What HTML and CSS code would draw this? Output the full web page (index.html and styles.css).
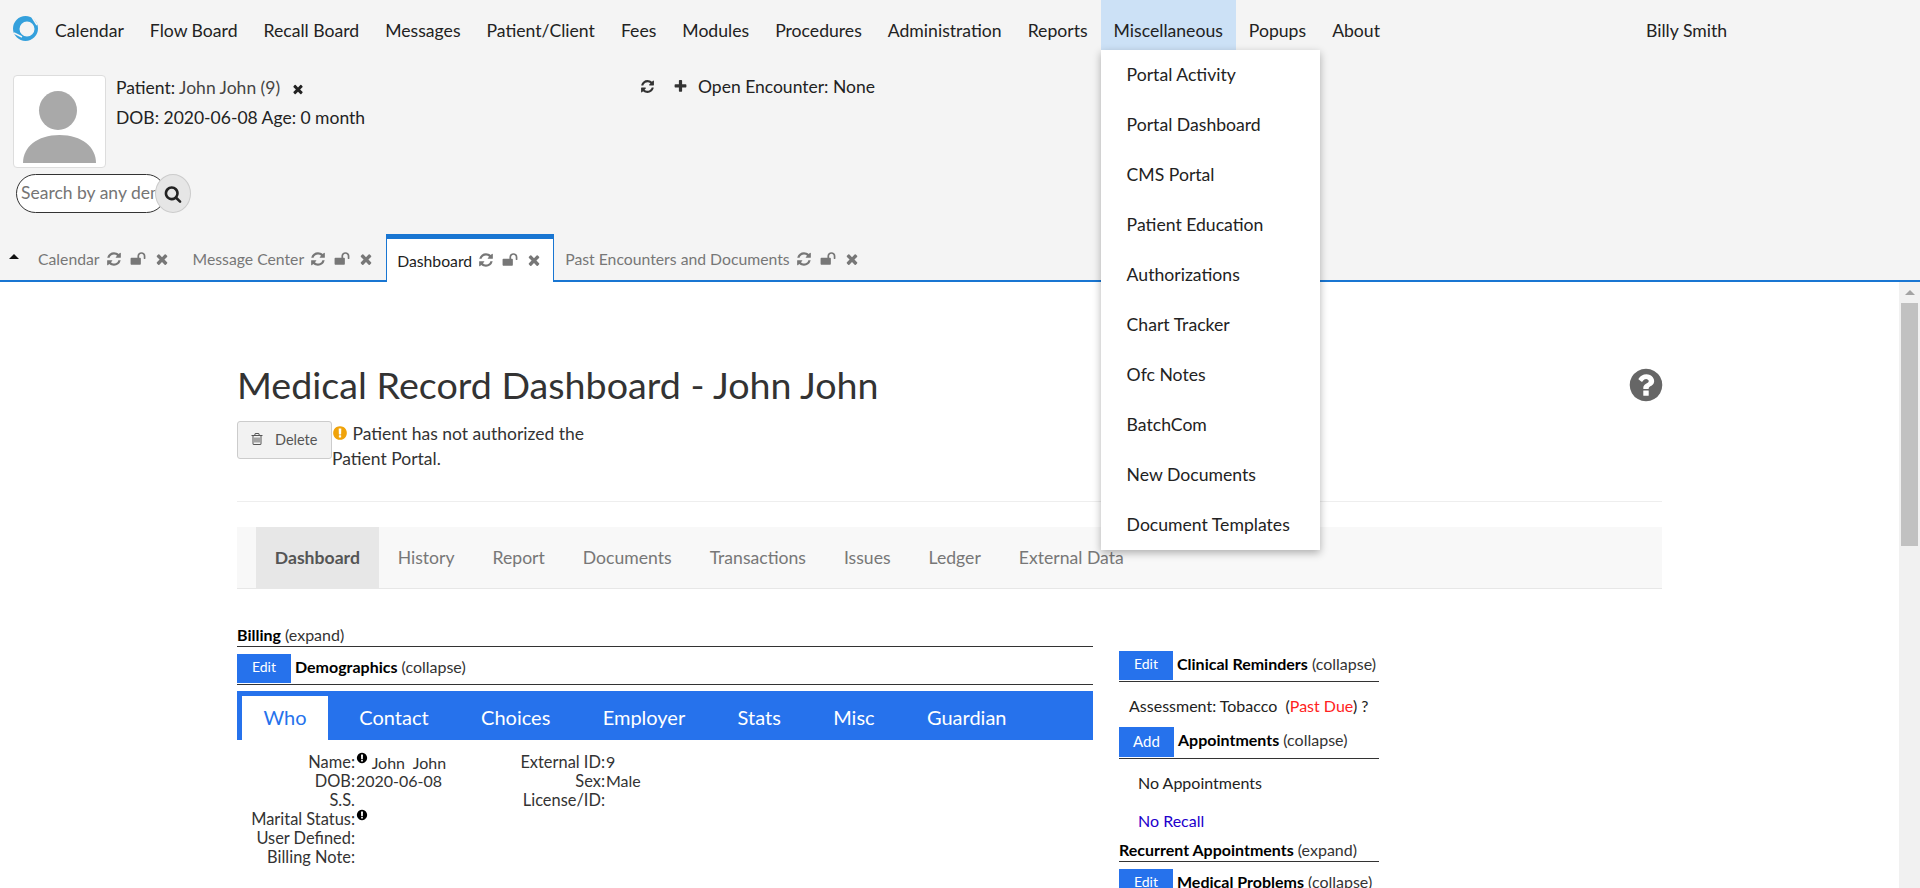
FILE: index.html
```html
<!DOCTYPE html>
<html lang="en">
<head>
  <meta charset="UTF-8">
  <title>OpenEMR</title>
  <link rel="stylesheet" href="styles.css">
</head>
<body>

  <svg class="icon-defs" xmlns="http://www.w3.org/2000/svg">
    <symbol id="i-times" viewBox="0 0 1792 1792"><path d="M1490 1322q0 40-28 68l-136 136q-28 28-68 28t-68-28l-294-294-294 294q-28 28-68 28t-68-28l-136-136q-28-28-28-68t28-68l294-294-294-294q-28-28-28-68t28-68l136-136q28-28 68-28t68 28l294 294 294-294q28-28 68-28t68 28l136 136q28 28 28 68t-28 68l-294 294 294 294q28 28 28 68z"/></symbol>
    <symbol id="i-refresh" viewBox="0 0 1792 1792"><path d="M1639 1056q0 5-1 7-64 268-268 434.5t-478 166.5q-146 0-282.5-55t-243.5-157l-129 129q-19 19-45 19t-45-19-19-45v-448q0-26 19-45t45-19h448q26 0 45 19t19 45-19 45l-137 137q71 66 161 102t187 36q134 0 250-65t186-179q11-17 53-117 8-23 30-23h192q13 0 22.5 9.5t9.5 22.5zm25-800v448q0 26-19 45t-45 19h-448q-26 0-45-19t-19-45 19-45l138-138q-148-137-349-137-134 0-250 65t-186 179q-11 17-53 117-8 23-30 23h-199q-13 0-22.5-9.5t-9.5-22.5v-7q65-268 270-434.5t480-166.5q146 0 284 55.5t245 156.5l130-129q19-19 45-19t45 19 19 45z"/></symbol>
    <symbol id="i-unlock" viewBox="0 0 1792 1792"><path d="M1728 576v256q0 26-19 45t-45 19h-64q-26 0-45-19t-19-45v-256q0-106-75-181t-181-75-181 75-75 181v192h96q40 0 68 28t28 68v576q0 40-28 68t-68 28h-960q-40 0-68-28t-28-68v-576q0-40 28-68t68-28h672v-192q0-185 131.5-316.5t316.5-131.5 316.5 131.5 131.5 316.5z"/></symbol>
    <symbol id="i-plus" viewBox="0 0 1792 1792"><path d="M1600 736v192q0 40-28 68t-68 28h-416v416q0 40-28 68t-68 28h-192q-40 0-68-28t-28-68v-416h-416q-40 0-68-28t-28-68v-192q0-40 28-68t68-28h416v-416q0-40 28-68t68-28h192q40 0 68 28t28 68v416h416q40 0 68 28t28 68z"/></symbol>
    <symbol id="i-search" viewBox="0 0 1792 1792"><path d="M1216 832q0-185-131.5-316.5t-316.5-131.5-316.5 131.5-131.5 316.5 131.5 316.5 316.5 131.5 316.5-131.5 131.5-316.5zm512 832q0 52-38 90t-90 38q-54 0-90-38l-343-342q-179 124-399 124-143 0-273.5-55.5t-225-150-150-225-55.5-273.5 55.5-273.5 150-225 225-150 273.5-55.5 273.5 55.5 225 150 150 225 55.5 273.5q0 220-124 399l343 343q37 37 37 90z"/></symbol>
    <symbol id="i-trash" viewBox="0 0 1792 1792"><path d="M704 736v576q0 14-9 23t-23 9h-64q-14 0-23-9t-9-23v-576q0-14 9-23t23-9h64q14 0 23 9t9 23zm256 0v576q0 14-9 23t-23 9h-64q-14 0-23-9t-9-23v-576q0-14 9-23t23-9h64q14 0 23 9t9 23zm256 0v576q0 14-9 23t-23 9h-64q-14 0-23-9t-9-23v-576q0-14 9-23t23-9h64q14 0 23 9t9 23zm128 724v-948h-896v948q0 22 7 40.5t14.5 27 10.5 8.5h832q3 0 10.5-8.5t14.5-27 7-40.5zm-672-1076h448l-48-117q-7-9-17-11h-317q-10 2-17 11zm928 32v64q0 14-9 23t-23 9h-96v948q0 83-47 143.5t-113 60.5h-832q-66 0-113-58.5t-47-141.5v-952h-96q-14 0-23-9t-9-23v-64q0-14 9-23t23-9h309l70-167q15-37 54-63t79-26h320q40 0 79 26t54 63l70 167h309q14 0 23 9t9 23z"/></symbol>
    <symbol id="i-exclaim" viewBox="0 0 1792 1792"><path d="M896 128q209 0 385.5 103t279.5 279.5 103 385.5-103 385.5-279.5 279.5-385.5 103-385.5-103-279.5-279.5-103-385.5 103-385.5 279.5-279.5 385.5-103zm128 1247v-190q0-14-9-23.5t-22-9.5h-192q-13 0-23 10t-10 23v190q0 13 10 23t23 10h192q13 0 22-9.5t9-23.5zm-2-344l18-621q0-12-10-18-10-8-24-8h-220q-14 0-24 8-10 6-10 18l17 621q0 10 10 17.5t24 7.5h185q14 0 23.5-7.5t10.5-17.5z"/></symbol>
    <symbol id="i-question" viewBox="0 0 1792 1792"><path d="M1024 1376v-192q0-14-9-23t-23-9h-192q-14 0-23 9t-9 23v192q0 14 9 23t23 9h192q14 0 23-9t9-23zm256-672q0-88-55.5-163t-138.5-116-170-41q-243 0-371 213-15 24 8 42l132 100q7 6 19 6 16 0 25-12 53-68 86-92 34-24 86-24 48 0 85.5 26t37.5 59q0 38-20 61t-68 45q-63 28-115.5 86.5t-52.5 125.5v36q0 14 9 23t23 9h192q14 0 23-9t9-23q0-19 21.5-49.5t54.5-49.5q32-18 49-28.5t46-35 44.5-48 28-60.5 12.5-81zm384 192q0 209-103 385.5t-279.5 279.5-385.5 103-385.5-103-279.5-279.5-103-385.5 103-385.5 279.5-279.5 385.5-103 385.5 103 279.5 279.5 103 385.5z"/></symbol>
  </svg>

  <!-- top menu -->
  <nav class="topnav">
    <svg class="logo" viewBox="0 0 25 25" width="25" height="25">
      <path fill-rule="evenodd" fill="#34a0dc" d="M12.500 0a12.500 12.500 0 1 0 0 25a12.500 12.500 0 1 0 0-25zM14 5.500a7.500 7.500 0 1 1 0 15a7.500 7.500 0 1 1 0-15z"/>
      <path d="M19 1 L24 9 M1 17 L9 21" stroke="#f4f4f4" stroke-width="1.500" fill="none"/>
    </svg>
    <a class="nav-item">Calendar</a>
    <a class="nav-item">Flow Board</a>
    <a class="nav-item">Recall Board</a>
    <a class="nav-item">Messages</a>
    <a class="nav-item">Patient/Client</a>
    <a class="nav-item">Fees</a>
    <a class="nav-item">Modules</a>
    <a class="nav-item">Procedures</a>
    <a class="nav-item">Administration</a>
    <a class="nav-item">Reports</a>
    <div class="nav-drop">
      <a class="nav-item active">Miscellaneous</a>
      <ul class="dropdown">
        <li>Portal Activity</li>
        <li>Portal Dashboard</li>
        <li>CMS Portal</li>
        <li>Patient Education</li>
        <li>Authorizations</li>
        <li>Chart Tracker</li>
        <li>Ofc Notes</li>
        <li>BatchCom</li>
        <li>New Documents</li>
        <li>Document Templates</li>
      </ul>
    </div>
    <a class="nav-item">Popups</a>
    <a class="nav-item">About</a>
    <span class="username">Billy Smith</span>
  </nav>

  <!-- patient bar -->
  <section class="patient-bar">
    <div class="patient-left">
      <div class="photo">
        <svg viewBox="0 0 92 92" width="92" height="92">
          <ellipse cx="45" cy="35.500" rx="19" ry="19.500" fill="#a9a9a9"/>
          <path d="M10 88 C10 72 24 60 46.500 60 C69 60 83 72 83 88 Z" fill="#a9a9a9"/>
        </svg>
      </div>
      <div class="patient-info">
        <div class="patient-line">Patient: <span class="muted">John John (9)</span>
          <svg class="icon x-icon"><use href="#i-times"/></svg>
        </div>
        <div class="patient-line">DOB: 2020-06-08 Age: 0 month</div>
      </div>
    </div>
    <div class="search-box">
      <input class="search-input" type="text" placeholder="Search by any demographics">
      <span class="search-btn"><svg class="icon search-icon"><use href="#i-search"/></svg></span>
    </div>
    <div class="encounter">
      <svg class="icon enc-icon"><use href="#i-refresh"/></svg>
      <svg class="icon enc-icon plus"><use href="#i-plus"/></svg>
      <span>Open Encounter: None</span>
    </div>
  </section>

  <!-- app tabs -->
  <div class="app-tabs">
    <span class="caret"></span>
    <div class="app-tab">Calendar
      <svg class="icon t-icon"><use href="#i-refresh"/></svg>
      <svg class="icon t-icon"><use href="#i-unlock"/></svg>
      <svg class="icon t-icon"><use href="#i-times"/></svg>
    </div>
    <div class="app-tab">Message Center
      <svg class="icon t-icon"><use href="#i-refresh"/></svg>
      <svg class="icon t-icon"><use href="#i-unlock"/></svg>
      <svg class="icon t-icon"><use href="#i-times"/></svg>
    </div>
    <div class="app-tab current">Dashboard
      <svg class="icon t-icon"><use href="#i-refresh"/></svg>
      <svg class="icon t-icon"><use href="#i-unlock"/></svg>
      <svg class="icon t-icon"><use href="#i-times"/></svg>
    </div>
    <div class="app-tab">Past Encounters and Documents
      <svg class="icon t-icon"><use href="#i-refresh"/></svg>
      <svg class="icon t-icon"><use href="#i-unlock"/></svg>
      <svg class="icon t-icon"><use href="#i-times"/></svg>
    </div>
  </div>

  <!-- dashboard frame -->
  <main class="frame">
    <div class="frame-body">
      <div class="page-head">
        <h1>Medical Record Dashboard - John John</h1>
        <svg class="icon help-icon"><use href="#i-question"/></svg>
      </div>
      <div class="action-row">
        <button class="delete-btn"><svg class="icon trash"><use href="#i-trash"/></svg>Delete</button>
        <p class="portal-note"><svg class="icon warn"><use href="#i-exclaim"/></svg> Patient has not authorized the Patient Portal.</p>
      </div>
      <hr class="rule">

      <ul class="page-tabs">
        <li class="selected">Dashboard</li>
        <li>History</li>
        <li>Report</li>
        <li>Documents</li>
        <li>Transactions</li>
        <li>Issues</li>
        <li>Ledger</li>
        <li>External Data</li>
      </ul>

      <div class="columns">
        <div class="col-left">
          <div class="section-head plain"><b>Billing</b> (expand)</div>
          <div class="section-head"><a class="btn-edit">Edit</a><b>Demographics</b> (collapse)</div>
          <ul class="demo-tabs">
            <li class="on">Who</li>
            <li>Contact</li>
            <li>Choices</li>
            <li>Employer</li>
            <li>Stats</li>
            <li>Misc</li>
            <li>Guardian</li>
          </ul>
          <div class="demo-grid">
            <div class="demo-col">
              <div class="demo-row"><span class="lbl">Name:</span><span class="val"><svg class="icon info"><use href="#i-exclaim"/></svg> John &nbsp;John</span></div>
              <div class="demo-row"><span class="lbl">DOB:</span><span class="val">2020-06-08</span></div>
              <div class="demo-row"><span class="lbl">S.S.</span><span class="val"></span></div>
              <div class="demo-row"><span class="lbl">Marital Status:</span><span class="val"><svg class="icon info"><use href="#i-exclaim"/></svg></span></div>
              <div class="demo-row"><span class="lbl">User Defined:</span><span class="val"></span></div>
              <div class="demo-row"><span class="lbl">Billing Note:</span><span class="val"></span></div>
            </div>
            <div class="demo-col second">
              <div class="demo-row"><span class="lbl">External ID:</span><span class="val">9</span></div>
              <div class="demo-row"><span class="lbl">Sex:</span><span class="val">Male</span></div>
              <div class="demo-row"><span class="lbl">License/ID:</span><span class="val"></span></div>
            </div>
          </div>
        </div>

        <div class="col-right">
          <div class="section-head"><a class="btn-edit">Edit</a><b>Clinical Reminders</b> (collapse)</div>
          <p class="reminder">Assessment: Tobacco &nbsp;(<span class="due">Past Due</span>) ?</p>
          <div class="section-head"><a class="btn-edit btn-add">Add</a><b>Appointments</b> (collapse)</div>
          <p class="appt first">No Appointments</p>
          <p class="appt recall">No Recall</p>
          <div class="section-head plain"><b>Recurrent Appointments</b> (expand)</div>
          <div class="section-head"><a class="btn-edit">Edit</a><b>Medical Problems</b> (collapse)</div>
        </div>
      </div>
    </div>

    <div class="scrollbar">
      <span class="scroll-up"></span>
      <span class="scroll-thumb"></span>
    </div>
  </main>

</body>
</html>
```

FILE: styles.css
```css
html, body {
  margin: 0;
  height: 888px;
  overflow: hidden;
}
body {
  font-family: Lato, sans-serif;
  font-size: 16px;
  color: #222;
  background: #fff;
  display: flex;
  flex-direction: column;
}
ul {
  list-style: none;
  margin: 0;
  padding: 0;
}
p {
  margin: 0;
}
.icon-defs {
  display: none;
}
.icon {
  fill: currentColor;
  flex: none;
}

/* top menu */
.topnav {
  height: 50px;
  background: #f4f4f4;
  display: flex;
  align-items: stretch;
  padding-left: 13px;
  font-size: 17.630px;
  flex: none;
}
.logo {
  margin: 16px 4px 0 0;
}
.nav-item {
  display: flex;
  align-items: center;
  height: 50px;
  box-sizing: border-box;
  padding: 11px 13px 0;
  color: #222;
}
.nav-item.active {
  background: #cce1f6;
}
.nav-drop {
  position: relative;
}
.dropdown {
  position: absolute;
  left: 0;
  top: 50px;
  width: 219px;
  height: 500px;
  background: #fff;
  box-shadow: 0 3px 8px rgba(0, 0, 0, 0.3);
  z-index: 10;
}
.dropdown li {
  height: 50px;
  line-height: 50px;
  padding-left: 26px;
}
.username {
  align-self: center;
  padding-top: 11px;
  margin-left: 253px;
}

/* patient bar */
.patient-bar {
  position: relative;
  height: 183px;
  background: #f4f4f4;
  font-size: 17.500px;
  flex: none;
  padding: 25px 0 0 13px;
  box-sizing: border-box;
}
.patient-left {
  display: flex;
}
.photo {
  width: 93px;
  height: 93px;
  background: #fff;
  border: 1px solid #ddd;
  border-radius: 4px;
  box-sizing: border-box;
  overflow: hidden;
}
.photo svg {
  display: block;
  margin: -1px;
}
.patient-info {
  padding-left: 10px;
}
.patient-line {
  height: 30px;
  line-height: 26px;
}
.muted {
  color: #444;
}
.x-icon {
  width: 14px;
  height: 14px;
  margin-left: 6px;
  vertical-align: -2px;
}
.search-box {
  display: flex;
  width: 175px;
  height: 39px;
  margin: 6px 0 0 3px;
  position: relative;
}
.search-input {
  width: 150px;
  height: 39px;
  box-sizing: border-box;
  border: 1px solid #333;
  border-radius: 20px;
  padding: 0 0 2px 4px;
  font: 17.500px Lato, sans-serif;
  background: #fff;
  outline: none;
}
.search-btn {
  position: absolute;
  left: 139px;
  top: 0;
  width: 36px;
  height: 39px;
  border-radius: 50%;
  background: #e6e6e6;
  border: 1px solid #ccc;
  box-sizing: border-box;
  display: flex;
  align-items: center;
  justify-content: center;
}
.search-icon {
  width: 18px;
  height: 18px;
}
.encounter {
  position: absolute;
  left: 640px;
  top: 24px;
  display: flex;
  align-items: center;
  height: 24px;
}
.enc-icon {
  width: 15px;
  height: 15px;
  color: #333;
}
.enc-icon.plus {
  margin: 0 10px 0 18px;
}

/* app tabs */
.app-tabs {
  height: 49px;
  background: #f4f4f4;
  border-bottom: 2px solid #1976d2;
  display: flex;
  align-items: flex-end;
  padding-left: 9px;
  flex: none;
  box-sizing: border-box;
  font-size: 15.750px;
}
.caret {
  width: 0;
  height: 0;
  border-left: 5px solid transparent;
  border-right: 5px solid transparent;
  border-bottom: 5px solid #111;
  margin: 0 8px 21px 0;
}
.app-tab {
  display: flex;
  align-items: center;
  height: 47px;
  padding: 4px 12px 0 11px;
  color: #777;
  box-sizing: border-box;
  white-space: nowrap;
}
.app-tab .t-icon {
  width: 16px;
  height: 16px;
  margin-left: 8px;
  color: #777;
}
.app-tab .t-icon:first-of-type {
  margin-left: 6px;
}
.app-tab.current {
  background: #fff;
  color: #222;
  border: 1px solid #1976d2;
  border-top: 5px solid #1976d2;
  border-bottom: 0;
  height: 48px;
  margin-bottom: -2px;
  padding: 0 11px 1px 10px;
}

/* dashboard frame */
.frame {
  flex: 1;
  display: flex;
  min-height: 0;
  overflow: hidden;
}
.frame-body {
  flex: 1;
  padding: 0 237px;
  min-width: 0;
  overflow: hidden;
}
.page-head {
  display: flex;
  justify-content: space-between;
  align-items: center;
  padding-top: 78px;
}
h1 {
  margin: 0;
  font-size: 37.650px;
  font-weight: 400;
  line-height: 50px;
  color: #333;
}
.help-icon {
  width: 38px;
  height: 38px;
  color: #666;
  margin-right: -3px;
}
.action-row {
  display: flex;
  margin-top: 11px;
}
.delete-btn {
  width: 95px;
  height: 38px;
  border: 1px solid #ccc;
  border-radius: 3px;
  background: #f2f2f2;
  color: #555;
  font: 14.500px Lato, sans-serif;
  display: flex;
  align-items: center;
  padding: 0 0 2px 12px;
  gap: 11px;
  flex: none;
}
.trash {
  width: 14px;
  height: 14px;
}
.portal-note {
  width: 256px;
  font-size: 17.500px;
  line-height: 25px;
  color: #333;
}
.warn {
  width: 16px;
  height: 16px;
  color: #f0a30a;
  vertical-align: -1px;
}
.rule {
  margin: 30px 0 0;
  border: 0;
  border-top: 1px solid #eee;
}

/* page tabs */
.page-tabs {
  display: flex;
  height: 62px;
  box-sizing: border-box;
  margin-top: 25px;
  padding-left: 19px;
  background: #f8f8f8;
  border-bottom: 1px solid #e7e7e7;
  font-size: 17.600px;
  color: #777;
}
.page-tabs li {
  padding: 0 19px;
  line-height: 61px;
  white-space: nowrap;
}
.page-tabs .selected {
  padding: 0 18.800px;
  background: #e7e7e7;
  color: #555;
  font-weight: 700;
}

/* dashboard columns */
.columns {
  display: flex;
  gap: 26px;
  margin-top: 38px;
}
.col-left {
  width: 856px;
  flex: none;
}
.col-right {
  width: 260px;
  flex: none;
  padding-top: 24px;
}
.section-head {
  display: flex;
  align-items: flex-start;
  border-bottom: 1px solid #333;
  color: #333;
  white-space: pre;
  line-height: 25px;
  padding-bottom: 1px;
}
.section-head b {
  color: #000;
  margin-left: 4px;
}
.section-head.plain {
  height: 20px;
  box-sizing: border-box;
  padding-bottom: 0;
  line-height: 16px;
  margin-bottom: 7px;
}
.section-head.plain b {
  margin-left: 0;
}
.btn-edit {
  width: 54px;
  height: 29px;
  line-height: 26px;
  font-size: 14px;
  background: #2672ec;
  color: #fff;
  text-align: center;
  flex: none;
}
.btn-add {
  width: 55px;
  height: 30px;
  line-height: 28px;
  font-size: 15px;
}
.demo-tabs {
  display: flex;
  height: 49px;
  margin-top: 6px;
  padding-top: 5px;
  background: #2672ec;
  box-sizing: border-box;
  color: #fff;
  font-size: 20px;
}
.demo-tabs li {
  margin: 0 5px;
  padding: 0 21.200px;
  line-height: 42px;
}
.demo-tabs .on {
  padding: 0 21.500px;
  background: #fff;
  color: #2672ec;
}
.demo-grid {
  display: flex;
  padding-top: 12px;
  line-height: 19px;
  color: #333;
}
.demo-col {
  width: 278px;
}
.demo-row {
  display: flex;
  height: 19px;
}
.lbl {
  width: 118px;
  text-align: right;
  margin-right: 1px;
  white-space: nowrap;
  font-size: 16.400px;
}
.second .lbl {
  width: 90px;
}
.info {
  width: 12px;
  height: 12px;
  color: #000;
  vertical-align: 5px;
}
.reminder {
  height: 45px;
  box-sizing: border-box;
  padding: 14px 0 0 10px;
}
.due {
  color: #f22;
}
.appt {
  height: 38px;
  line-height: 39px;
  padding-left: 19px;
}
.appt.first {
  margin-top: 4px;
}
.recall {
  color: #2200cc;
  margin-bottom: 3px;
}

/* frame scrollbar */
.scrollbar {
  width: 21px;
  background: #f1f1f1;
  position: relative;
  flex: none;
}
.scroll-up {
  position: absolute;
  left: 6px;
  top: 8px;
  border-left: 5px solid transparent;
  border-right: 5px solid transparent;
  border-bottom: 5px solid #a3a3a3;
}
.scroll-thumb {
  position: absolute;
  left: 2px;
  top: 21px;
  width: 17px;
  height: 243px;
  background: #c1c1c1;
}
```
